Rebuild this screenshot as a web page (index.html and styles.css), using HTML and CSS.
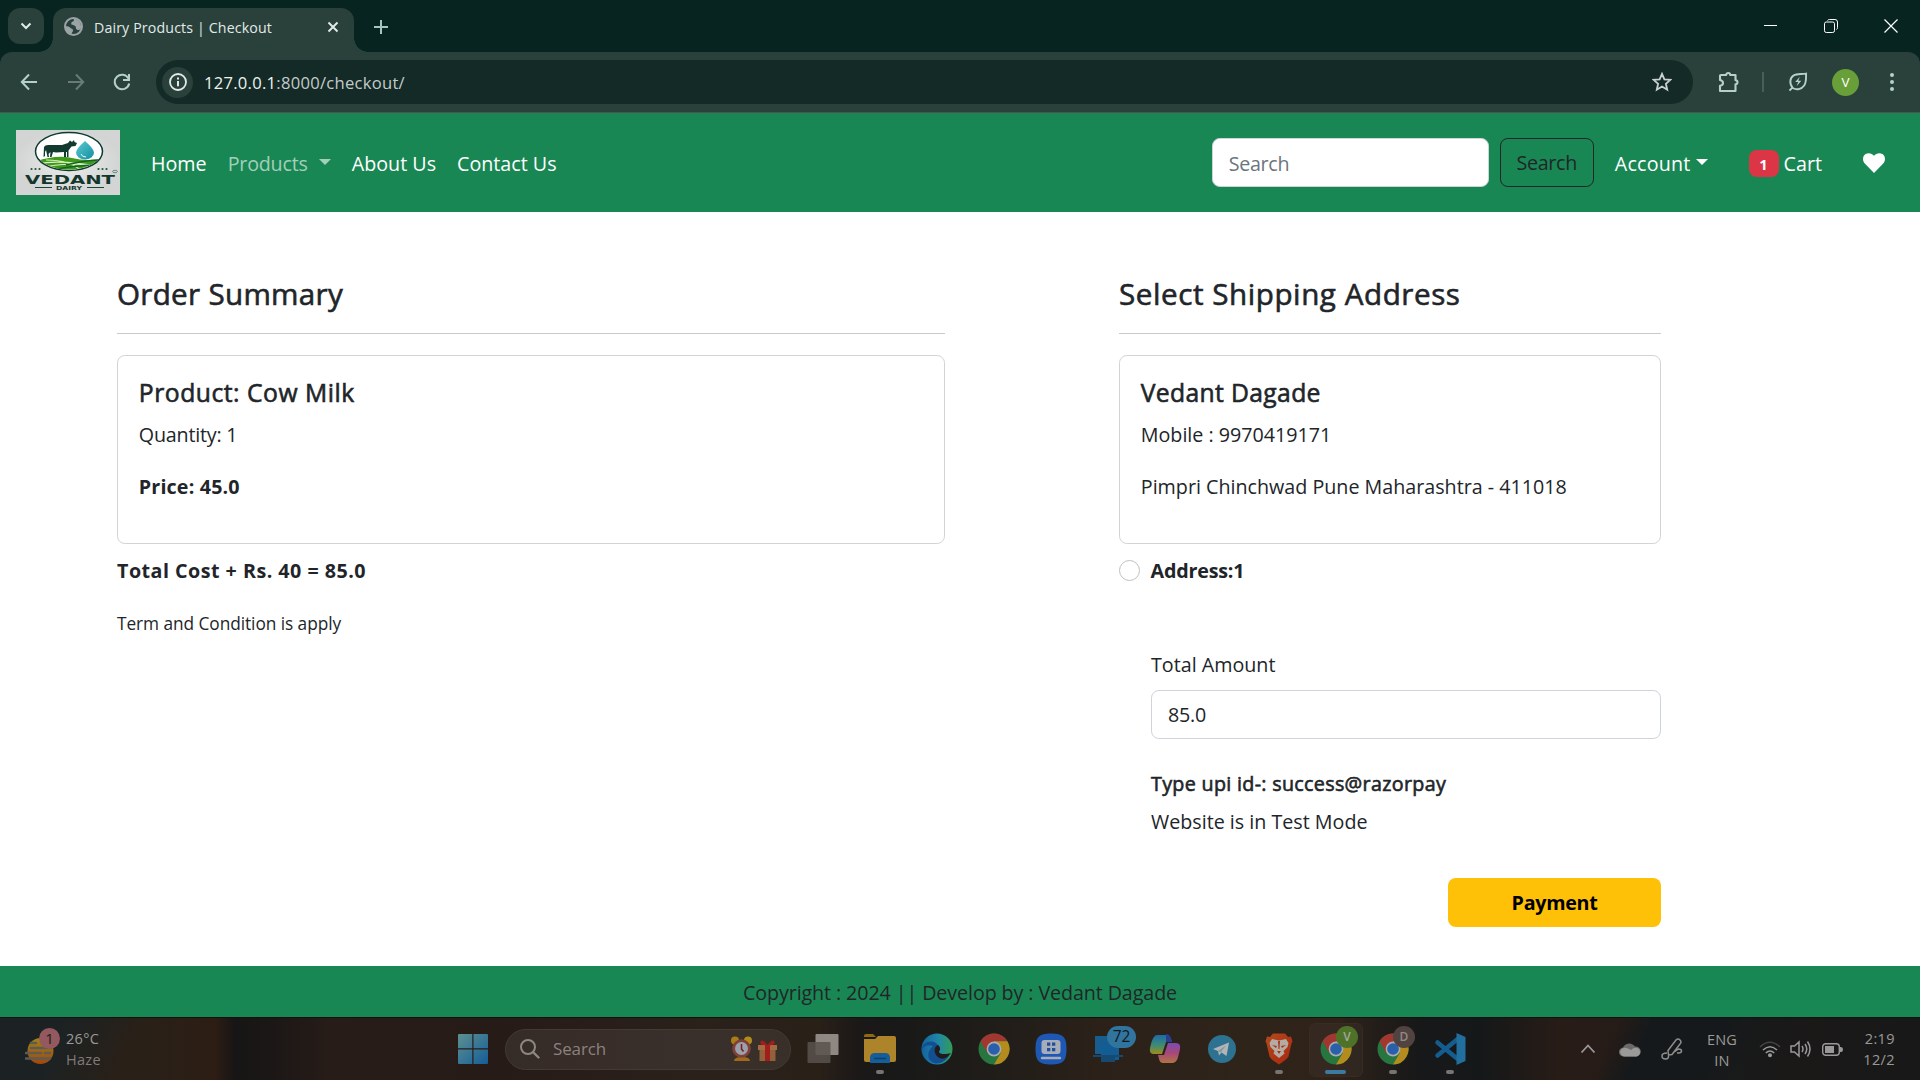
FILE: index.html
```html
<!DOCTYPE html>
<html lang="en">
<head>
<meta charset="utf-8">
<title>Dairy Products | Checkout</title>
<link rel="stylesheet" href="styles.css">
</head>
<body>
<svg class="defs" width="0" height="0" aria-hidden="true">
  <defs>
    <linearGradient id="gWin" x1="0" y1="0" x2="1" y2="1"><stop offset="0" stop-color="#5c9090"/><stop offset="1" stop-color="#155d98"/></linearGradient>
    <linearGradient id="gSun" x1="0" y1="0" x2="0" y2="1"><stop offset="0" stop-color="#a18317"/><stop offset="1" stop-color="#a2480d"/></linearGradient>
    <linearGradient id="gEdge" x1="0" y1="0" x2="1" y2="0"><stop offset="0" stop-color="#14639f"/><stop offset=".55" stop-color="#1f87a5"/><stop offset="1" stop-color="#359c55"/></linearGradient>
    <linearGradient id="gCopA" x1="0" y1="0" x2="0" y2="1"><stop offset="0" stop-color="#1c6bab"/><stop offset=".55" stop-color="#3f8c72"/><stop offset="1" stop-color="#a08b1c"/></linearGradient>
    <linearGradient id="gCopB" x1="0" y1="0" x2="0" y2="1"><stop offset="0" stop-color="#7a4cb0"/><stop offset=".5" stop-color="#a8477c"/><stop offset="1" stop-color="#b0753f"/></linearGradient>
    <linearGradient id="gBrave" x1="0" y1="0" x2="1" y2="1"><stop offset="0" stop-color="#b34a1b"/><stop offset="1" stop-color="#a92610"/></linearGradient>
    <linearGradient id="gDrop" x1="0" y1="0" x2="1" y2="1"><stop offset="0" stop-color="#5cc9d4"/><stop offset="1" stop-color="#138f9f"/></linearGradient>
    <radialGradient id="gLogo"><stop offset="0" stop-color="#ececec"/><stop offset="1" stop-color="#d3d4d4"/></radialGradient>
    <clipPath id="cOval"><ellipse cx="53" cy="21.5" rx="32.5" ry="18"/></clipPath>
    <symbol id="chrome" viewBox="0 0 32 32">
      <circle cx="16" cy="16" r="15.5" fill="#27763f"/>
      <path d="M2.6 8.2A15.5 15.5 0 0 1 29.4 8.2L16 8.2 9.2 20Z" fill="#a23630"/>
      <path d="M29.4 8.2A15.5 15.5 0 0 1 16 31.5L22.8 20 16 8.2Z" fill="#b38c1d"/>
      <circle cx="16" cy="16" r="7.4" fill="#a9adaf"/><circle cx="16" cy="16" r="5.8" fill="#2a60ab"/>
    </symbol>
  </defs>
</svg>

<header class="browser">
  <div class="tabstrip">
    <button class="tab-search"><svg width="12" height="8" viewBox="0 0 12 8"><path d="M1.5 1.5 6 6l4.500-4.500" fill="none" stroke="#e2ebe8" stroke-width="2"/></svg></button>
    <div class="tab">
      <svg class="globe" width="19" height="19" viewBox="0 0 19 19"><circle cx="9.500" cy="9.500" r="8.500" fill="#29403b" stroke="#9ba3a5" stroke-width="2"/><path d="M8 1.500C11 2 10 4 9 4.500S7 5 7.300 7c.2 1.500 3 .8 4 2 1 1.300 0 2.500 1.500 3.500s3 .5 4.200-1A8.500 8.500 0 0 0 8 1.500zM1.300 9c2.500.2 4 .5 5 1.800s2.700.8 2.700 2.600-1.500 1.800-1.500 4A8.500 8.500 0 0 1 1.300 9z" fill="#9ba3a5"/></svg>
      <span class="tab-title">Dairy Products | Checkout</span>
      <svg class="tab-close" width="12" height="12" viewBox="0 0 12 12"><path d="m1.500 1.500 9 9m0-9-9 9" stroke="#e0e9e6" stroke-width="2"/></svg>
    </div>
    <svg class="new-tab" width="14" height="14" viewBox="0 0 14 14"><path d="M7 0v14M0 7h14" stroke="#a9c4be" stroke-width="2"/></svg>
    <div class="window-controls">
      <svg width="14" height="14" viewBox="0 0 14 14"><path d="M0 6.500h13" stroke="#fff"/></svg>
      <svg width="14" height="14" viewBox="0 0 14 14"><rect x=".5" y="3" width="10" height="10.500" rx="1.800" fill="none" stroke="#fff"/><path d="M3.500 1.500q.5-1 2-1H11q2.500 0 2.500 2.500v5.500q0 1.500-1 2" fill="none" stroke="#fff"/></svg>
      <svg width="14" height="14" viewBox="0 0 14 14"><path d="m.5.5 13 13m0-13-13 13" stroke="#fff" stroke-width="1.200"/></svg>
    </div>
  </div>
  <div class="toolbar">
    <svg width="18" height="18" viewBox="0 0 18 18"><path d="M17 9H2M9 1.500 1.800 9 9 16.500" fill="none" stroke="#b5d0ca" stroke-width="2"/></svg>
    <svg width="18" height="18" viewBox="0 0 18 18"><path d="M1 9h15M9 1.500 16.200 9 9 16.500" fill="none" stroke="#697b77" stroke-width="2"/></svg>
    <svg width="18" height="18" viewBox="0 0 18 18"><path d="M15.500 5.500A7.300 7.300 0 1 0 16.200 10.500M16 1v6h-6" fill="none" stroke="#b5d0ca" stroke-width="2"/></svg>
    <div class="omnibox">
      <span class="info"><svg width="18" height="18" viewBox="0 0 18 18"><circle cx="9" cy="9" r="8" fill="none" stroke="#e3e9e7" stroke-width="1.800"/><path d="M9 8v5.200M9 4.600v2" stroke="#e3e9e7" stroke-width="2"/></svg></span>
      <span class="url"><b>127.0.0.1</b>:8000/checkout/</span>
      <svg class="star" width="20" height="20" viewBox="0 0 20 20"><path d="m10 1.800 2.400 5.500 6 .5-4.500 4 1.300 5.900L10 14.600l-5.200 3.100 1.300-5.900-4.500-4 6-.5z" fill="none" stroke="#c9d1cf" stroke-width="1.800"/></svg>
    </div>
    <div class="actions">
      <svg width="22" height="22" viewBox="0 0 22 22"><path d="M3 4h5.200a2 2 0 0 1 4 0H17.500v5.200a2 2 0 0 1 0 4V20H2v-5.200q3-.5 3-2.800T2 9V5q0-1 1-1z" fill="none" stroke="#b5d0ca" stroke-width="2.100" stroke-linejoin="round"/></svg>
      <i class="divider"></i>
      <svg width="20" height="20" viewBox="0 0 21 21"><path d="M1.500 19.500 5 16M5 16.800C1 12 2 6 6 3.500 9 1.500 14 2.500 19 1.700c-.2 5 .5 9-2 12.500-3 4.300-8 5-12 2.600z" fill="none" stroke="#b5d0ca" stroke-width="2"/><path d="m12.500 5-5 5.500h3.200L9 15l5-5.800h-3.200z" fill="#b5d0ca"/></svg>
      <span class="avatar">V</span>
      <svg width="4" height="20" viewBox="0 0 4 20"><circle cx="2" cy="3" r="2" fill="#b5d0ca"/><circle cx="2" cy="10" r="2" fill="#b5d0ca"/><circle cx="2" cy="17" r="2" fill="#b5d0ca"/></svg>
    </div>
  </div>
</header>

<nav class="navbar">
  <svg class="logo" width="104" height="65" viewBox="0 0 104 65">
    <rect width="104" height="65" fill="url(#gLogo)"/>
    <ellipse cx="53" cy="21.500" rx="33.500" ry="19" fill="#fff" stroke="#0d3b2e" stroke-width="1.500"/>
    <g clip-path="url(#cOval)">
      <path d="M18 32q22-8 38-4t32 0v16H18z" fill="#3f9a1b"/>
      <path d="M20 34q24-5 66 3M24 38q28-7 56-1M30 30q26 0 36 12" fill="none" stroke="#d9eebf" stroke-width="1.200"/>
      <path d="M50 35q20-5 36-5M40 39q24-4 42-4" fill="none" stroke="#156323" stroke-width="1.500"/>
    </g>
    <path d="M27.500 27 28 17q1-2 4-2h14l6-2 2-2.500 2 1.500 2-2 .5 2 2.500 1-1.500 3-4 .5-3 4v6.500h-1.500V22h-1v5H48v-5l-8 .5-3-.5-1.500 5H34l.5-5-2 2 .5 3h-1.500L30 20l-1 2v4z" fill="#123b2f"/>
    <path d="M69 11q9 8 9 11.500a9 7 0 0 1-18 0Q60 19 69 11z" fill="url(#gDrop)"/>
    <path d="M65 24q1 3 5 3" stroke="#e9fbfc" fill="none"/>
    <g fill="#1b5a35"><circle cx="15.500" cy="39" r="1.100"/><circle cx="19.500" cy="39" r="1.100"/><circle cx="23.500" cy="39" r="1.100"/><circle cx="82.500" cy="39" r="1.100"/><circle cx="86.500" cy="39" r="1.100"/><circle cx="90.500" cy="39" r="1.100"/></g>
    <text x="9" y="53.500" class="logo-name" textLength="90" lengthAdjust="spacingAndGlyphs">VEDANT</text>
    <text x="40" y="59.800" class="logo-sub" textLength="26" lengthAdjust="spacingAndGlyphs">DAIRY</text>
    <path d="M19 57.500h17M71 57.500h17" stroke="#174536"/>
    <ellipse cx="99" cy="41.500" rx="2.400" ry="1.200" fill="none" stroke="#52786b" stroke-width=".8"/>
  </svg>
  <div class="links">
    <a>Home</a>
    <a class="muted"><span class="tight-2">Products</span><i class="caret"></i></a>
    <a>About Us</a>
    <a>Contact Us</a>
  </div>
  <div class="nav-search"><div class="control placeholder"><span class="tight-3">Search</span></div><button class="btn-outline"><span class="tight-3">Search</span></button></div>
  <a class="account"><span>Account</span><i class="caret"></i></a>
  <a class="cart"><span class="badge">1</span><span>Cart</span></a>
  <svg class="heart" width="22" height="20" viewBox="0 0 22 20"><path d="M11 20 2 10.700C-1 7.500-.4 3 2.600 1.100 5.400-.7 8.800.1 11 2.700 13.200.1 16.600-.7 19.400 1.100c3 1.900 3.600 6.400.6 9.600z" fill="#fff"/></svg>
</nav>

<main class="checkout">
  <section>
    <h4 class="heading order-heading">Order Summary</h4>
    <hr>
    <div class="card">
      <h5>Product: Cow Milk</h5>
      <p class="tight-2">Quantity: 1</p>
      <p class="bold price">Price: 45.0</p>
    </div>
    <p class="total bold">Total Cost + Rs. 40 = 85.0</p>
    <p class="small">Term and Condition is apply</p>
  </section>
  <section>
    <h4 class="heading address-heading">Select Shipping Address</h4>
    <hr>
    <div class="card">
      <h5 class="name">Vedant Dagade</h5>
      <p>Mobile : 9970419171</p>
      <p>Pimpri Chinchwad Pune Maharashtra - 411018</p>
    </div>
    <label class="radio-row bold"><i class="radio"></i><span class="tight-2">Address:1</span></label>
    <form class="pay">
      <label>Total Amount</label>
      <div class="control"><span class="tight-2">85.0</span></div>
      <h6>Type upi id-: success@razorpay</h6>
      <p>Website is in Test Mode</p>
      <button type="button" class="btn-pay"><span class="tight-3">Payment</span></button>
    </form>
  </section>
</main>
<footer class="footer">Copyright : 2024 || Develop by : Vedant Dagade</footer>

<div class="taskbar">
  <div class="weather">
    <svg width="37" height="38" viewBox="0 0 37 38"><circle cx="15.500" cy="23" r="13" fill="url(#gSun)"/><path d="M6 15h5M6 20h20M1 25h15m4 0h5M1 30.500h24" stroke="#5d5b55" stroke-width="2.600" stroke-linecap="round"/><circle cx="24.500" cy="10.500" r="10.500" fill="#93595f"/><text x="24.500" y="15.800" class="w-badge">1</text></svg>
    <div class="w-text"><span>26°C</span><span class="w-haze">Haze</span></div>
  </div>
  <svg class="start" width="30" height="30" viewBox="0 0 30 30"><path d="M0 1q0-1 1-1h13.300v14.300H0zM15.500 0H29q1 0 1 1v13.300H15.500zM0 15.500h14.300V30H1q-1 0-1-1zM15.500 15.500H30V29q0 1-1 1H15.500z" fill="url(#gWin)"/></svg>
  <div class="tb-search">
    <svg width="20" height="20" viewBox="0 0 20 20"><circle cx="8" cy="8" r="7" fill="none" stroke="#8d8783" stroke-width="2"/><path d="m13 13 5.500 5.500" stroke="#8d8783" stroke-width="2.400" stroke-linecap="round"/></svg>
    <span>Search</span>
    <svg class="festive" width="47" height="26" viewBox="0 0 47 26"><circle cx="4" cy="4.500" r="4" fill="#a97e14"/><circle cx="17" cy="4.500" r="4" fill="#b18c16"/><path d="M3 25q0-4 8-4t8 4z" fill="#a26a18"/><circle cx="10.500" cy="12.500" r="9.300" fill="#804039"/><circle cx="10.500" cy="12.500" r="6.500" fill="#9aa0ac"/><path d="M10.500 8v5l2 2.500" stroke="#7c1b1d" stroke-width="1.500" fill="none"/><path d="M28.500 12h16v13h-16z" fill="#93603c"/><path d="M27 9h19v5H27z" fill="#a26b44"/><path d="M34 9h5v16h-5zM36.500 9q-8 1-7-3t7 3q6-7 7-3t-7 3z" fill="#a31e1b"/></svg>
  </div>
  <div class="apps">
    <span class="app"><svg width="32" height="32" viewBox="0 0 32 32"><rect x="8.500" y="1" width="23" height="21" rx="1" fill="#8f8781"/><rect x=".5" y="9" width="23" height="21" rx="1" fill="#58524e" opacity=".85"/></svg></span>
    <span class="app"><svg width="32" height="32" viewBox="0 0 32 32"><path d="M0 3q0-2 2-2h7l3 3H0z" fill="#8f6b0c"/><path d="M0 6h11l3-3h16q2 0 2 2v22q0 2-2 2H2q-2 0-2-2z" fill="#ad8429"/><path d="M6 30v-5q0-5 5-5h10q5 0 5 5v5z" fill="#155e99"/><path d="M10 25.500h12" stroke="#0e3d70" stroke-width="1.500"/></svg><i class="dot"></i></span>
    <span class="app"><svg width="32" height="32" viewBox="0 0 32 32"><circle cx="16" cy="16" r="15.500" fill="url(#gEdge)"/><path d="M.6 17C1.500 8 12 6 17 12c3 3.500 2 6 0 8 3 4 9 4 12 1-5 10-14 11-18 8C5 25 7 17 12 13 7 11 2 13 .6 17z" fill="#124f91"/><path d="M17 12c-4 1-5 8 0 12s10 0 13-4c-6 2-12 1-12-1s3-3-1-7z" fill="#201a18"/></svg></span>
    <span class="app"><svg width="32" height="32"><use href="#chrome"/></svg></span>
    <span class="app"><svg width="32" height="32" viewBox="0 0 32 32"><path d="M16 .5C28 .5 31.500 4 31.500 16S28 31.500 16 31.500.5 28 .5 16 4 .5 16 .5z" fill="#1e58b3"/><rect x="6.500" y="7" width="19" height="14" rx="3" fill="#a6adb8"/><path d="M12 9.500h3.300v3.300H12zM17 9.500h3.300v3.300H17zM12 15h3.300v3.300H12zM17 15h3.300v3.300H17z" fill="#1e4f9f"/><path d="M7 25h18" stroke="#a6adb8" stroke-width="2.400" stroke-linecap="round"/></svg></span>
    <span class="app"><svg width="32" height="32" viewBox="0 0 32 32"><path d="M3 3h14v18H3z" fill="#175d8e"/><path d="M9 9h18v18H9z" fill="#135d94"/><path d="M1 22h30v2H1zM9 22h14v7H9z" fill="#164a73"/></svg><b class="pill">72</b></span>
    <span class="app"><svg width="32" height="32" viewBox="0 0 32 32"><path d="M8 2h10q3 0 4 4l1 3h-6l-4 12H5q-5 0-4-6 2-9 4-11 1-2 3-2z" fill="url(#gCopA)"/><path d="M17 1q4 0 5 5l1 3h-6z" fill="#263f91"/><path d="M24 30H14q-3 0-4-4l-1-4h6l4-12h8q5 0 4 6-2 9-3 11-2 3-4 3z" fill="url(#gCopB)"/></svg></span>
    <span class="app"><svg width="32" height="32" viewBox="0 0 32 32"><circle cx="16" cy="16" r="14" fill="#2e7292"/><path d="M7 16 23 9.500 20.500 23l-5-3.500-2.500 3-1-4.500z" fill="#b3b5b5"/><path d="m12 18 8-5.500-5.500 7" fill="#81979f"/></svg></span>
    <span class="app"><svg width="32" height="32" viewBox="0 0 32 32"><path d="M10 .5h12l3 3.500 3-.5 1.500 5-1 2-3 13q-.5 2-9.500 8-9-6-9.500-8l-3-13-1-2 1.500-5 3 .5z" fill="url(#gBrave)"/><path d="m9 6 7 1.500L23 6l2.500 4-1 4-4 4 1 2.500L16 25l-5.500-4.500 1-2.500-4-4-1-4z" fill="#b5aba5"/><path d="m9 12 5 1-1 2zm14 0-5 1 1 2zM14 18h4l-2 3zM15 8h2l-.5 8h-1z" fill="#a73817"/></svg><i class="dot"></i></span>
    <span class="app active"><svg width="32" height="32"><use href="#chrome"/></svg><b class="profile green">V</b><i class="dot wide"></i></span>
    <span class="app"><svg width="32" height="32"><use href="#chrome"/></svg><b class="profile brown">D</b><i class="dot"></i></span>
    <span class="app"><svg width="32" height="32" viewBox="0 0 32 32"><path d="M3.500 9.500 23 25.500M3.500 22.500 23 6.500" stroke="#155d90" stroke-width="4.500" stroke-linecap="round"/><path d="M22.500 0 31.500 4v24L22.500 32z" fill="#226f9d"/></svg><i class="dot"></i></span>
  </div>
  <div class="tray">
    <svg width="16" height="10" viewBox="0 0 16 10"><path d="m1.500 8.500 6.500-7 6.500 7" fill="none" stroke="#9a9998" stroke-width="1.800"/></svg>
    <svg class="cloud" width="22" height="15" viewBox="0 0 22 15"><path d="M5 14.500a4.500 4.500 0 0 1-1-9A7 7 0 0 1 16 4.500a5 5 0 0 1 1.500 10z" fill="#6b6a69"/><path d="M5 14.500a4.500 4.500 0 0 1-3-7q3-3 7-1l3 1.500q3-3 6.500-2a4.500 4.500 0 0 1-1 8.500z" fill="#9a9a99"/></svg>
    <svg class="pen" width="22" height="22" viewBox="0 0 22 22"><path d="M7.500 17 7 12.500l8-10.500q2-2 4 0t0 4L11 16.500zM6 15q-5 0-5 3t3.500 3 3-4M12.500 14.500l5-3.500q3 0 3 2t-3 2h-1.500" fill="none" stroke="#8f8e8d" stroke-width="1.500"/></svg>
    <div class="lang"><span>ENG</span><span>IN</span></div>
    <svg class="wifi" width="22" height="17" viewBox="0 0 22 17"><path d="M1 6q10-9.500 20 0" fill="none" stroke="#444" stroke-width="1.600"/><path d="M4 9q7-6.500 14 0M6.800 12q4.200-4 8.400 0" fill="none" stroke="#999" stroke-width="1.600"/><circle cx="11" cy="14.300" r="2" fill="#999"/></svg>
    <svg class="volume" width="22" height="18" viewBox="0 0 22 18"><path d="M1 6h3.500L9 2v14l-4.500-4H1zM12 6q2 3 0 6M15 4q3.500 5 0 10M17.500 1.500q5 7.500 0 15" fill="none" stroke="#999" stroke-width="1.500"/></svg>
    <svg class="battery" width="21" height="13" viewBox="0 0 21 13"><rect x=".7" y=".7" width="16.600" height="11.600" rx="3" fill="none" stroke="#999" stroke-width="1.400"/><rect x="3" y="3" width="9" height="7" fill="#999"/><path d="M18 4h1q2 0 2 2.500T19 9h-1z" fill="#999"/></svg>
    <div class="clock"><span>2:19</span><span>12/2</span></div>
  </div>
</div>
</body>
</html>
```
FILE: styles.css
```css
* { box-sizing: border-box; }
body { margin: 0; width: 1920px; height: 1080px; overflow: hidden; display: flex; flex-direction: column; background: #fff; color: #212529; font-family: "Open Sans", "Noto Sans", sans-serif; font-size: 19.7px; line-height: 31.2px; }
svg { display: block; flex: none; }
.defs { position: absolute; }
button { font: inherit; margin: 0; border: 0; padding: 0; }
h4, h5, h6, p { margin: 0; }
.tight-2 { letter-spacing: -.2px; }
.tight-3 { letter-spacing: -.3px; }

/* Browser window */
.browser { height: 113px; background: #082420; border-bottom: 1px solid #4b5452; flex: none; }
.tabstrip { height: 52px; display: flex; align-items: flex-start; padding-left: 8px; }
.tab-search { width: 36px; height: 36px; margin-top: 8px; border-radius: 12px; background: #29403b; display: grid; place-items: center; }
.tab { position: relative; width: 301px; height: 44px; margin: 8px 0 0 9px; padding: 0 15px 7px 11px; border-radius: 13px 13px 0 0; background: #29403b; display: flex; align-items: center; }
.tab::before, .tab::after { content: ""; position: absolute; bottom: 0; width: 14px; height: 14px; }
.tab::before { left: -14px; background: radial-gradient(circle at 0 0, transparent 13.5px, #29403b 14px); }
.tab::after { right: -14px; background: radial-gradient(circle at 100% 0, transparent 13.5px, #29403b 14px); }
.tab-title { margin: 2px 0 0 11px; color: #e2ebe8; font-size: 14.2px; line-height: 20px; letter-spacing: .14px; white-space: nowrap; }
.tab-close { margin-left: auto; }
.new-tab { margin: 20px 0 0 20px; }
.window-controls { margin: 19px 22px 0 auto; display: flex; gap: 46px; }
.toolbar { height: 60px; padding: 8px 26px 8px 20px; background: #29403b; border-radius: 12px 12px 0 0; display: flex; align-items: center; }
.toolbar > svg { margin-right: 28.5px; }
.toolbar > svg:nth-child(3) { margin-right: 25px; }
.omnibox { width: 1537px; height: 44px; border-radius: 22px; background: #132a27; display: flex; align-items: center; padding: 0 21px 0 6px; }
.info { width: 31px; height: 31px; border-radius: 50%; background: #29403b; display: grid; place-items: center; }
.url { margin: 1px 0 0 11px; color: #c3cbc9; font-size: 16.6px; letter-spacing: .26px; }
.url b { font-weight: 400; color: #edf2f0; }
.star { margin-left: auto; }
.actions { flex: 1; display: flex; align-items: center; padding-left: 25px; }
.divider { width: 2px; height: 20px; margin: 0 24px 0 22px; background: #45605a; }
.avatar { width: 27px; height: 27px; margin: 0 31px 0 24px; border-radius: 50%; background: #689f38; color: #fff; font-size: 13.5px; line-height: 27px; text-align: center; }

/* Site navigation */
.navbar { height: 99px; background: #198754; display: flex; align-items: center; padding: 0 35px 0 16px; color: #fff; flex: none; }
.logo-name { font: 700 12px "DejaVu Sans", sans-serif; fill: #14362c; }
.logo-sub { font: 700 5.5px "DejaVu Sans", sans-serif; fill: #14362c; }
.links { display: flex; gap: 21px; margin-left: 31px; padding-top: 2px; }
.muted { color: #a3cfbb; }
.muted, .account { display: flex; align-items: center; }
.caret { border: 6px solid transparent; border-top-color: currentColor; border-bottom: 0; margin-left: 5px; }
.muted .caret { margin: 0 0 2px 11px; }
.nav-search { display: flex; gap: 11px; margin-left: auto; }
.control { height: 49.4px; border: 1px solid #ced4da; border-radius: 7.8px; background: #fff; padding: 8.2px 16px; color: #212529; }
.nav-search .control { width: 277px; padding-top: 9.2px; color: #6c757d; }
.btn-outline { width: 94px; height: 49.4px; padding-top: 1px; border: 1px solid #212529; border-radius: 7.8px; background: transparent; color: #212529; }
.account { margin-left: 21px; padding-top: 2px; letter-spacing: .22px; }
.account .caret { margin-bottom: 2px; }
.cart { display: flex; align-items: center; margin-left: 41px; padding-top: 2px; }
.badge { width: 30px; height: 27px; margin-right: 5px; border-radius: 7.8px; background: #dc3545; font-size: 14.8px; line-height: 28px; font-weight: 700; text-align: center; }
.heart { margin-left: 41px; }

/* Checkout */
.checkout { height: 754px; display: grid; grid-template-columns: 828px 542px; column-gap: 174px; align-items: start; padding: 62.8px 0 0 117px; flex: none; }
.heading, h5, h6 { font-weight: 400; -webkit-text-stroke: .6px #212529; }
.heading { font-size: 29.6px; line-height: 37.4px; }
.order-heading { letter-spacing: .3px; }
.address-heading { letter-spacing: .56px; }
hr { margin: 20.8px 0; border: 0; border-top: 1px solid #c8c9ca; }
.card { height: 189.6px; padding: 20.8px; border: 1px solid #d3d4d5; border-radius: 7.8px; margin-bottom: 10.4px; }
.card h5 { font-size: 24.7px; letter-spacing: .52px; margin-bottom: 10.4px; }
.card .name { letter-spacing: .35px; }
.card p { padding-top: 1px; margin-bottom: 19.8px; }
.bold { font-weight: 700; }
.price { letter-spacing: .16px; }
.total { letter-spacing: .48px; margin-bottom: 20.8px; }
.small { padding-top: 1px; font-size: 17.3px; letter-spacing: -.06px; }
.radio-row { display: flex; align-items: center; gap: 10.6px; }
.radio { width: 21px; height: 21px; border: 1px solid #bfbfbf; border-radius: 50%; }
.pay { display: flex; flex-direction: column; padding: 62px 0 0 32px; }
.pay label { padding-top: 1px; margin-bottom: 9.4px; }
.pay h6 { margin: 32.2px 0 9.4px; font-size: 19.7px; line-height: 25px; letter-spacing: .32px; }
.btn-pay { width: 213px; height: 49.4px; margin: 41px 0 0 auto; padding-top: 1px; border-radius: 7.8px; background: #ffc107; color: #000; font-weight: 700; }
.footer { height: 51px; padding-top: 11.4px; background: #198754; text-align: center; letter-spacing: -.1px; flex: none; }

/* Taskbar */
.taskbar { height: 63px; flex: none; display: flex; align-items: center; border-top: 1px solid #111; color: #9a9998;
  background:
    linear-gradient(115deg, #1c2223 0, #1c2223 60px, transparent 130px),
    linear-gradient(115deg, transparent 1470px, #15191b 1500px, #15191b 1560px, transparent 1640px),
    linear-gradient(90deg, #292018 0, #292018 150px, #2d1d14 215px, #171515 235px, #1b1716 270px, #271c18 330px, #261b17 500px, #2b211b 700px, #292018 820px, #1b1818 860px, #181918 900px, #211d19 1000px, #2b2119 1100px, #2f241a 1240px, #2e2219 1340px, #171819 1420px, #151819 1480px, #281c17 1560px, #241b18 1640px, #1b1918 1760px, #181818 1920px); }
.weather { display: flex; width: 433px; padding-left: 25px; gap: 4px; }
.w-badge { font: 15px "Open Sans", sans-serif; text-anchor: middle; fill: #211a1b; }
.w-text { display: flex; flex-direction: column; font-size: 14.5px; line-height: 21px; letter-spacing: .28px; white-space: nowrap; }
.w-haze { color: #7f7b78; }
.start { margin-left: 25px; }
.tb-search { width: 286px; height: 41px; margin: 0 3px 0 17px; border: 1px solid #443a35; border-radius: 20.5px; background: #ffffff12; display: flex; align-items: center; padding: 0 12px 0 14px; font-size: 17px; letter-spacing: -.14px; color: #8a837e; }
.tb-search span { margin-left: 13px; }
.festive { margin-left: auto; }
.apps { display: flex; height: 62px; }
.app { position: relative; width: 57px; display: grid; place-items: center; }
.active::before { content: ""; position: absolute; left: 2px; top: 5px; width: 52px; height: 52px; border: 1px solid #372c24; border-radius: 6px; background: #ffffff08; }
.app svg { position: relative; }
.dot { position: absolute; left: 25px; bottom: 6px; width: 8px; height: 4px; border-radius: 2px; background: #777371; }
.wide { left: 18px; width: 21px; background: #3c7ba0; }
.pill { position: absolute; left: 28px; top: 8px; width: 29px; height: 22px; border-radius: 11px; background: #31759f; color: #11171b; font-size: 15.5px; line-height: 21px; font-weight: 400; text-align: center; }
.profile { position: absolute; left: 29px; top: 8px; width: 22px; height: 22px; border-radius: 50%; font-size: 12px; line-height: 22px; font-weight: 600; text-align: center; color: #a3a99c; }
.green { background: #4e7328; }
.brown { background: #51433f; color: #92898a; }
.tray { flex: 1; display: flex; align-items: center; padding: 0 25px 0 102px; font-size: 14.5px; line-height: 21px; }
.cloud { margin-left: 23px; }
.pen { margin-left: 20px; }
.lang, .clock { display: flex; flex-direction: column; align-items: center; }
.lang { margin-left: 24px; letter-spacing: .1px; padding-top: 2px; }
.wifi { margin-left: 22px; }
.volume { margin-left: 9px; }
.battery { margin-left: 10px; }
.clock { align-items: flex-end; margin-left: auto; letter-spacing: .4px; }
```
